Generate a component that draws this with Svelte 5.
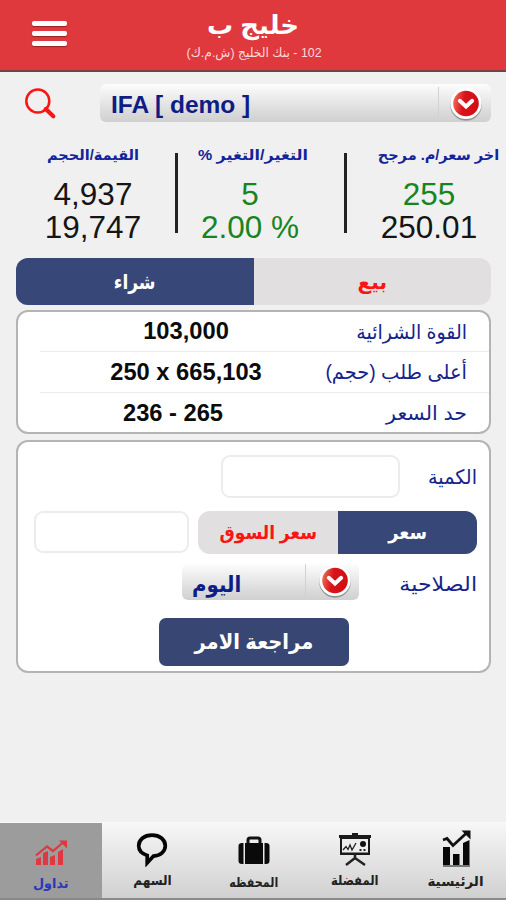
<script>
  let side = $state('buy');
  let priceMode = $state('limit');
  let quantity = $state('');
  let price = $state('');
  let active = $state('trade');

  const rows = [
    { label: 'القوة الشرائية', value: '103,000', cls: 'r1' },
    { label: 'أعلى طلب (حجم)', value: '250 x 665,103', cls: 'r2' },
    { label: 'حد السعر', value: '236 - 265', cls: 'r3' }
  ];

  const tabs = [
    { id: 'trade', label: 'تداول' },
    { id: 'stock', label: 'السهم' },
    { id: 'wallet', label: 'المحفظه' },
    { id: 'watch', label: 'المفضلة' },
    { id: 'home', label: 'الرئيسية' }
  ];
</script>

{#snippet knob()}
  <svg class="knob" width="36" height="36" viewBox="0 0 36 36">
    <defs>
      <linearGradient id="knobRed" x1="0" y1="0.4" x2="1" y2="0.6">
        <stop offset="0" stop-color="#ee6a55" />
        <stop offset="0.4" stop-color="#d9131a" />
        <stop offset="1" stop-color="#d30d12" />
      </linearGradient>
    </defs>
    <circle cx="18" cy="19.5" r="15.6" fill="#000" opacity="0.13" />
    <circle cx="18" cy="18.7" r="15.8" fill="#000" opacity="0.22" />
    <circle cx="18" cy="17.5" r="15.6" fill="#fff" />
    <circle cx="18" cy="17.5" r="12.8" fill="url(#knobRed)" />
    <path d="M11.8 14.8 L18 20.5 L24.2 14.8" fill="none" stroke="#fff" stroke-width="3.9" stroke-linecap="round" />
  </svg>
{/snippet}

<div class="screen">
  <header>
    <button class="menu" aria-label="القائمة"><i></i><i></i><i></i></button>
    <div class="titles">
      <h1 dir="rtl">خليج ب</h1>
      <p dir="rtl">102 - بنك الخليج (ش.م.ك)</p>
    </div>
  </header>

  <div class="search">
    <svg width="34" height="34" viewBox="0 0 34 34" fill="none" stroke="#fb1414">
      <circle cx="12.8" cy="14" r="11.5" stroke-width="2.5" />
      <path d="M20.8 22 L28.3 29.2" stroke-width="4.2" stroke-linecap="round" />
    </svg>
    <div class="select wide">
      <span class="picked">IFA [ demo ]</span>
      <span class="end">{@render knob()}</span>
    </div>
  </div>

  <div class="stats">
    <div class="stat a">
      <h2 dir="rtl"><span>القيمة/الحجم</span></h2>
      <b>4,937</b>
      <b>19,747</b>
    </div>
    <div class="bar"></div>
    <div class="stat b">
      <h2 dir="rtl"><span>التغير/التغير %</span></h2>
      <b class="up">5</b>
      <b class="up">2.00 %</b>
    </div>
    <div class="bar"></div>
    <div class="stat c">
      <h2 dir="rtl"><span>اخر سعر/م. مرجح</span></h2>
      <b class="up">255</b>
      <b>250.01</b>
    </div>
  </div>

  <div class="segment sides">
    <button class:on={side === 'buy'} onclick={() => (side = 'buy')}><span class="buy">شراء</span></button>
    <button class:on={side === 'sell'} onclick={() => (side = 'sell')}><span class="sell">بيع</span></button>
  </div>

  <section class="card info">
    {#each rows as row}
      <div class="row {row.cls}">
        <strong>{row.value}</strong>
        <span class="label" dir="rtl">{row.label}</span>
      </div>
    {/each}
  </section>

  <section class="card form">
    <div class="line qty">
      <input bind:value={quantity} aria-label="الكمية" />
      <span class="label lq">الكمية</span>
    </div>
    <div class="line price">
      <input bind:value={price} aria-label="سعر" />
      <div class="segment modes">
        <button class:on={priceMode === 'market'} onclick={() => (priceMode = 'market')}><span class="market">سعر السوق</span></button>
        <button class:on={priceMode === 'limit'} onclick={() => (priceMode = 'limit')}><span class="limit">سعر</span></button>
      </div>
    </div>
    <div class="line valid">
      <div class="select small">
        <span class="picked today">اليوم</span>
        <span class="end">{@render knob()}</span>
      </div>
      <span class="label lv">الصلاحية</span>
    </div>
    <button class="review"><span>مراجعة الامر</span></button>
  </section>

  <nav>
    {#each tabs as tab}
      <button class:active={active === tab.id} onclick={() => (active = tab.id)}>
        <svg class="icon-{tab.id}" width="40" height="44" viewBox="0 0 40 44">
          {#if tab.id === 'trade'}
            <g fill="#e0383f">
              <path d="M5 36l5-2v8H5zM12 30l5-2v14h-5zM19 34l5-2v10h-5zM27 29l5-3v16h-5z" />
              <path d="M5 32.5 L16 23.5 L22 28 L32 19.5" fill="none" stroke="#e0383f" stroke-width="2.2" />
              <path d="M28 17.5h8v8z" />
            </g>
          {:else if tab.id === 'stock'}
            <path d="M19 12.2c-8 0-13.3 4.5-13.3 10.6 0 4.400 3.2 8 8.500 9.600v7.500l6.300-6.800c7.200-.5 11.800-4.800 11.800-10.300 0-6.100-5.300-10.600-13.300-10.600z" fill="none" stroke="#050505" stroke-width="3.7" />
          {:else if tab.id === 'wallet'}
            <path d="M14 19v-4q0-2 2-2h8q2 0 2 2v4" fill="none" stroke="#111" stroke-width="3" />
            <path d="M11 18h18v21H11zM9.500 18v21H8q-3.500 0-3.500-3V21q0-3 3.500-3zM30.500 18v21h1.500q3.500 0 3.500-3V21q0-3-3.500-3z" fill="#0a0a0a" />
          {:else if tab.id === 'watch'}
            <path d="M4 12h13v-2h6v2h13v3h-1v17H5V15H4z" fill="#1a1a1a" />
            <path d="M7 16h26v13.500H7z" fill="#eee" />
            <path d="M8 27l3-3.500 2 3 2-4.500 2 5 4-7" fill="none" stroke="#222" stroke-width="1.3" />
            <circle cx="28" cy="21" r="3" fill="#111" />
            <path d="M24.500 26h2v2h-2zM28.500 26h2v2h-2z" fill="#222" />
            <path d="M20 31v5M20 35L11 42M20 35l10 7" fill="none" stroke="#222" stroke-width="2.5" />
          {:else}
            <path d="M7 24h7v18H7zM17 31h6.500v11H17zM27 20l6.500-3v25H27z" fill="#080808" />
            <path d="M7 17L11 15.500 17 22.500 30 10.500" fill="none" stroke="#111" stroke-width="2.8" />
            <path d="M25.500 7.500h9v9z" fill="#111" />
            <path d="M7 43.200h27" stroke="#777" stroke-width="2.4" />
          {/if}
        </svg>
        <span class={tab.id}>{tab.label}</span>
      </button>
    {/each}
  </nav>
</div>

<style>
  :global(body) { margin: 0; }
  .screen, button, input { font-family: "Liberation Sans", "DejaVu Sans", sans-serif; }
  .screen {
    box-sizing: border-box;
    width: 506px;
    height: 900px;
    display: flex;
    flex-direction: column;
    background: #f0f0f0;
    overflow: hidden;
  }
  button { border: 0; padding: 0; margin: 0; background: none; }
  h1, h2, p { margin: 0; font-weight: normal; }
  span { display: inline-block; white-space: nowrap; }

  header {
    flex: none;
    box-sizing: border-box;
    height: 72px;
    display: grid;
    grid-template-columns: 100px 306px 100px;
    background: #df393d;
    border-bottom: 2px solid #754346;
    color: #fff;
  }
  .menu { display: flex; flex-direction: column; gap: 5px; padding: 21px 0 0 32px; }
  .menu i { width: 35px; height: 5px; border-radius: 2px; background: #fff; box-shadow: 0 1px 1px #982327; }
  .titles { display: flex; flex-direction: column; align-items: center; }
  h1 { font-size: 26px; font-weight: bold; line-height: 32px; margin-top: 9px; }
  header p { font-size: 13px; line-height: 18px; margin: 3px 0 0 3px; white-space: nowrap; color: #fbd9da; transform: scaleX(0.95); }

  .search { box-sizing: border-box; flex: none; height: 51px; display: flex; padding: 12px 15px 0 25px; justify-content: space-between; }
  .search > svg { margin-top: 3px; }
  .select {
    box-sizing: border-box;
    display: flex;
    justify-content: space-between;
    border-radius: 6px;
    background: linear-gradient(#fdfdfd, #f1f1f1 25%, #dadada 75%, #d0d0d0);
    color: #0e1d85;
    font-weight: bold;
  }
  .wide { width: 391px; height: 38px; padding-left: 11px; }
  .wide .picked { font-size: 23px; line-height: 42px; transform: scaleX(1.065); transform-origin: left; }
  .end { border-left: 1px solid #d2d2d2; }
  .wide .end { width: 52px; margin-top: 3px; height: 32px; }
  .wide .knob { margin: -1px 0 0 9px; }
  .knob { display: block; }

  .stats { flex: none; height: 135px; display: grid; grid-template-columns: 175px 3px 166px 3px 159px; }
  .stat { display: flex; flex-direction: column; align-items: center; padding-top: 19px; }
  .stat.a { padding-left: 11px; }
  .stat.b { padding-left: 0; margin-right: 22px; }
  .stat.c { padding-left: 5px; }
  .bar { background: #222; height: 80px; margin-top: 30px; }
  h2 { font-size: 14.5px; line-height: 26px; height: 26px; color: #14249a; font-weight: bold; }
  .b h2 { margin-left: 6px; transform: scaleX(1.1); }
  .c h2 { margin-left: 15px; margin-right: -4px; }
  .stat b { font-weight: normal; font-size: 31.5px; line-height: 33px; white-space: nowrap; color: #151515; }
  .stat h2 + b { margin-top: 10px; }
  .stat .up { color: #18841f; }

  .segment { display: flex; overflow: hidden; background: #e1dfe0; }
  .segment button { flex: 1; color: #fb1414; font-weight: bold; }
  .segment button.on { background: #374778; color: #fff; }
  .sides { flex: none; height: 47px; margin: 0 15px 0 16px; border-radius: 12px; }
  .sides button { font-size: 20px; }
  .buy { transform: scaleX(0.85); }

  .card { box-sizing: border-box; flex: none; margin: 5px 15px 0 16px; border: 2px solid #b4b4b4; border-radius: 12px; background: #fff; }
  .info { height: 124px; padding-left: 22px; }
  .row { height: 40px; display: flex; align-items: center; justify-content: space-between; padding-right: 22px; }
  .row:first-child { height: 39px; }
  .row + .row { border-top: 1px solid #ececec; }
  .row strong { flex: none; width: 292px; text-align: center; font-size: 23.7px; color: #0b0b0b; }
  .r3 strong { width: 266px; }
  .label { color: #14248c; font-size: 20px; line-height: 40px; transform-origin: right; }
  .row .label { flex: 1; text-align: right; }
  .row.r1 .label { transform: scaleX(0.95); }
  .row.r2 .label { flex: none; margin-left: -30px; transform: scaleX(0.97); }
  .row.r3 .label { transform: scaleX(1.03); }

  .form { height: 233px; margin-top: 6px; padding: 13px 12px 0 16px; display: flex; flex-direction: column; }
  input { box-sizing: border-box; border: 2px solid #ececec; border-radius: 9px; background: #fff; outline: none; padding: 0 10px; font-size: 20px; }
  .line { display: flex; justify-content: space-between; }
  .qty { height: 56px; }
  .qty input { width: 179px; height: 43px; margin-left: 187px; }
  .lq { margin-top: 2px; transform: scaleX(0.96); }
  .price { height: 53px; }
  .price input { width: 155px; height: 42px; }
  .modes { width: 279px; height: 43px; border-radius: 12px; }
  .modes button { font-size: 19px; }
  .market { transform: scaleX(0.9); }
  .limit { transform: scaleX(0.94); }
  .valid { height: 54px; }
  .small { width: 177px; height: 36px; margin-left: 148px; padding-left: 10px; }
  .today { font-size: 22px; line-height: 41px; transform: scaleX(0.9); transform-origin: left; }
  .small .end { width: 53px; height: 34px; }
  .small .knob { margin: -1px 0 0 11px; }
  .lv { transform: scaleX(1.11); }
  .review { flex: none; width: 190px; height: 48px; margin-left: 125px; border-radius: 7px; background: #374672; color: #fff; font-weight: bold; font-size: 21px; }
  .review span { transform: scaleX(0.93); }

  nav { flex: none; height: 77px; margin-top: auto; display: grid; grid-template-columns: 102px repeat(4, 1fr); background: linear-gradient(#f7f7f7, #cfcfcf); box-shadow: 0 -1px #fafafa; }
  nav button { box-shadow: inset 0 -2px #8a8a8a; display: flex; flex-direction: column; align-items: center; justify-content: flex-start; color: #222; font-size: 13.5px; }
  nav svg { display: block; flex: none; }
  nav span { font-weight: bold; line-height: 24px; margin-top: 2px; }
  nav .active { background: #9c9c9c; color: #2939b5; }
  nav .icon-wallet { margin: 2px 0 -2px 1px; }
  nav .trade { margin-top: 5px; transform: scaleX(0.95); }
  nav .stock { transform: scaleX(0.9); }
  nav .wallet { margin-top: 4px; transform: scaleX(0.82); }
  nav .watch { transform: scaleX(0.86); }
  nav .home { margin-top: 3px; }
</style>
